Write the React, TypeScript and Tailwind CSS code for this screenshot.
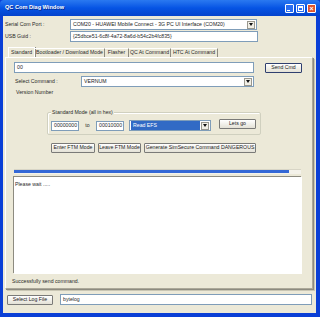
const field = "bg-white border border-[#7f9db9]";

const Btn = ({ w, label, def }: { w: number; label: string; def?: boolean }) => (
  <div
    className={`h-[10px] flex items-center justify-center rounded-[1px] bg-gradient-to-b from-[#ffffff] to-[#e3e1d6] border ${
      def ? "border-[#2f3f6f]" : "border-[#7a7a78]"
    } text-[#222] whitespace-nowrap`}
    style={{ width: w }}
  >
    {label}
  </div>
);

const Combo = ({ w, value, selected }: { w: number; value: string; selected?: boolean }) => (
  <div className={`h-[11px] flex items-center ${field}`} style={{ width: w }}>
    <div
      className={`flex-1 h-full flex items-center pl-[2px] whitespace-nowrap overflow-hidden ${
        selected ? "bg-[#316ac5] text-white m-[1px]" : "text-[#222]"
      }`}
    >
      {value}
    </div>
    <div className="w-[8px] h-[8px] mr-[1px] bg-[#f1efe6] border border-[#9a988e] flex items-center justify-center">
      <svg width="4" height="3" viewBox="0 0 4 3">
        <path d="M0 0h4L2 3z" fill="#111" />
      </svg>
    </div>
  </div>
);

const tabs = [
  { label: "Standard", w: 27 },
  { label: "Bootloader / Download Mode", w: 70 },
  { label: "Flasher", w: 24 },
  { label: "QC At Command", w: 42 },
  { label: "HTC At Command", w: 47 },
];

export default function App() {
  return (
    <div
      className="w-[320px] h-[317px] bg-[#0a3fd6] flex flex-col text-[5.2px] leading-none text-[#2a2a2a] overflow-hidden"
      style={{ fontFamily: '"Liberation Sans", Arial, sans-serif' }}
    >
      {/* title bar */}
      <div className="h-[16px] shrink-0 flex items-center bg-gradient-to-b from-[#2a79f0] via-[#0654e4] to-[#0443cc] rounded-t-[4px] px-[5px]">
        <span className="text-white font-bold text-[5.6px] [text-shadow:1px_1px_0_#0a2a8a]">QC Com Diag Window</span>
        <div className="ml-auto flex gap-[2px] mr-[-1px]">
          <div className="w-[9px] h-[9px] rounded-[1px] border border-white bg-[#2a6ef0] flex items-end justify-start p-[1px]">
            <div className="w-[3px] h-[1px] bg-white" />
          </div>
          <div className="w-[9px] h-[9px] rounded-[1px] border border-white bg-[#2a6ef0] flex items-center justify-center">
            <div className="w-[5px] h-[5px] border border-white border-t-2" />
          </div>
          <div className="w-[9px] h-[9px] rounded-[1px] border border-white bg-[#e0542c] flex items-center justify-center text-white font-bold text-[7px]">
            ×
          </div>
        </div>
      </div>

      {/* client area */}
      <div className="flex-1 ml-[3px] mr-[4px] mb-[4px] bg-[#ece9d8] flex flex-col">
        <div className="flex items-center mt-[3px] h-[11px]">
          <div className="w-[67px] pl-[2px]">Serial Com Port :</div>
          <Combo w={187} value="COM20 - HUAWEI Mobile Connect - 3G PC UI Interface (COM20)" />
        </div>
        <div className="flex items-center mt-[1px] h-[11px]">
          <div className="w-[67px] pl-[2px]">USB Guid :</div>
          <div className={`w-[188px] h-[11px] flex items-center pl-[2px] ${field}`}>
            {"{25dbce51-6c8f-4a72-8a6d-b54c2b4fc835}"}
          </div>
        </div>

        {/* tabs */}
        <div className="flex mt-[5px] ml-[5px] h-[10px] items-end">
          {tabs.map((t, i) => (
            <div
              key={t.label}
              className={`flex items-center justify-center whitespace-nowrap ${
                i === 0
                  ? "h-[10px] border-l border-t border-r border-[#fff] shadow-[1px_0_0_#8d8b80] bg-[#ece9d8]"
                  : "h-[9px] border-r border-t border-t-[#fff] border-r-[#8d8b80]"
              }`}
              style={{ width: t.w }}
            >
              {t.label}
            </div>
          ))}
        </div>

        {/* panel */}
        <div className="ml-[2px] w-[308px] h-[232px] border-l border-t border-white shadow-[1px_1px_0_#8d8b80,2px_2px_0_#c9c6b4] border-r border-b border-r-[#aca899] border-b-[#aca899] flex flex-col">
          <div className="flex items-center mt-[4px] ml-[8px]">
            <div className={`w-[240px] h-[11px] flex items-center pl-[2px] ${field}`}>00</div>
            <div className="ml-[11px]">
              <Btn w={37} label="Send Cmd" def />
            </div>
          </div>
          <div className="flex items-center mt-[3px] ml-[9px]">
            <div className="w-[66px]">Select Command :</div>
            <Combo w={173} value="VERNUM" />
          </div>
          <div className="mt-[3px] ml-[10px] h-[6px]">Version Number</div>

          {/* group */}
          <div className="relative ml-[41px] mt-[16px] w-[214px] h-[23px] border border-[#d0d0bf] rounded-[2px] shadow-[inset_1px_1px_0_#fff]">
            <span className="absolute -top-[3px] left-[3px] bg-[#ece9d8] px-[1px]">Standard Mode (all in hex)</span>
            <div className="flex items-center mt-[7px] ml-[3px]">
              <div className={`w-[28px] h-[10px] flex items-center pl-[2px] ${field}`}>00000000</div>
              <div className="w-[17px] text-center">to</div>
              <div className={`w-[28px] h-[10px] flex items-center pl-[2px] ${field}`}>00010000</div>
              <div className="ml-[5px]">
                <Combo w={82} value="Read EFS" selected />
              </div>
              <div className="ml-[8px] -mt-[3px]">
                <Btn w={37} label="Lets go" />
              </div>
            </div>
          </div>

          <div className="flex gap-[3px] ml-[45px] mt-[8px]">
            <Btn w={44} label="Enter FTM Mode" />
            <Btn w={43} label="Leave FTM Mode" />
            <Btn w={112} label="Generate SimSecure Command DANGEROUS" />
          </div>

          {/* progress */}
          <div className="ml-[8px] mt-[16px] w-[287px] h-[5px] bg-[#f4f2ea] border-t border-[#d8d5c6] flex">
            <div className="w-[275px] h-[3px] bg-[#3468d6]" />
          </div>

          <div className="ml-[7px] mt-[2px] w-[288px] h-[97px] bg-white border-l border-t border-[#8d8b80] shadow-[1px_1px_0_#fff] pl-[1px] pt-[5px]">
            Please wait .....
          </div>
          <div className="ml-[6px] mt-[6px]">Successfully send command.</div>
        </div>

        {/* bottom */}
        <div className="flex items-center mt-[5px] ml-[4px]">
          <Btn w={46} label="Select Log File" />
          <div className={`ml-[7px] w-[252px] h-[11px] flex items-center pl-[2px] ${field}`}>bytelog</div>
        </div>
      </div>
    </div>
  );
}
